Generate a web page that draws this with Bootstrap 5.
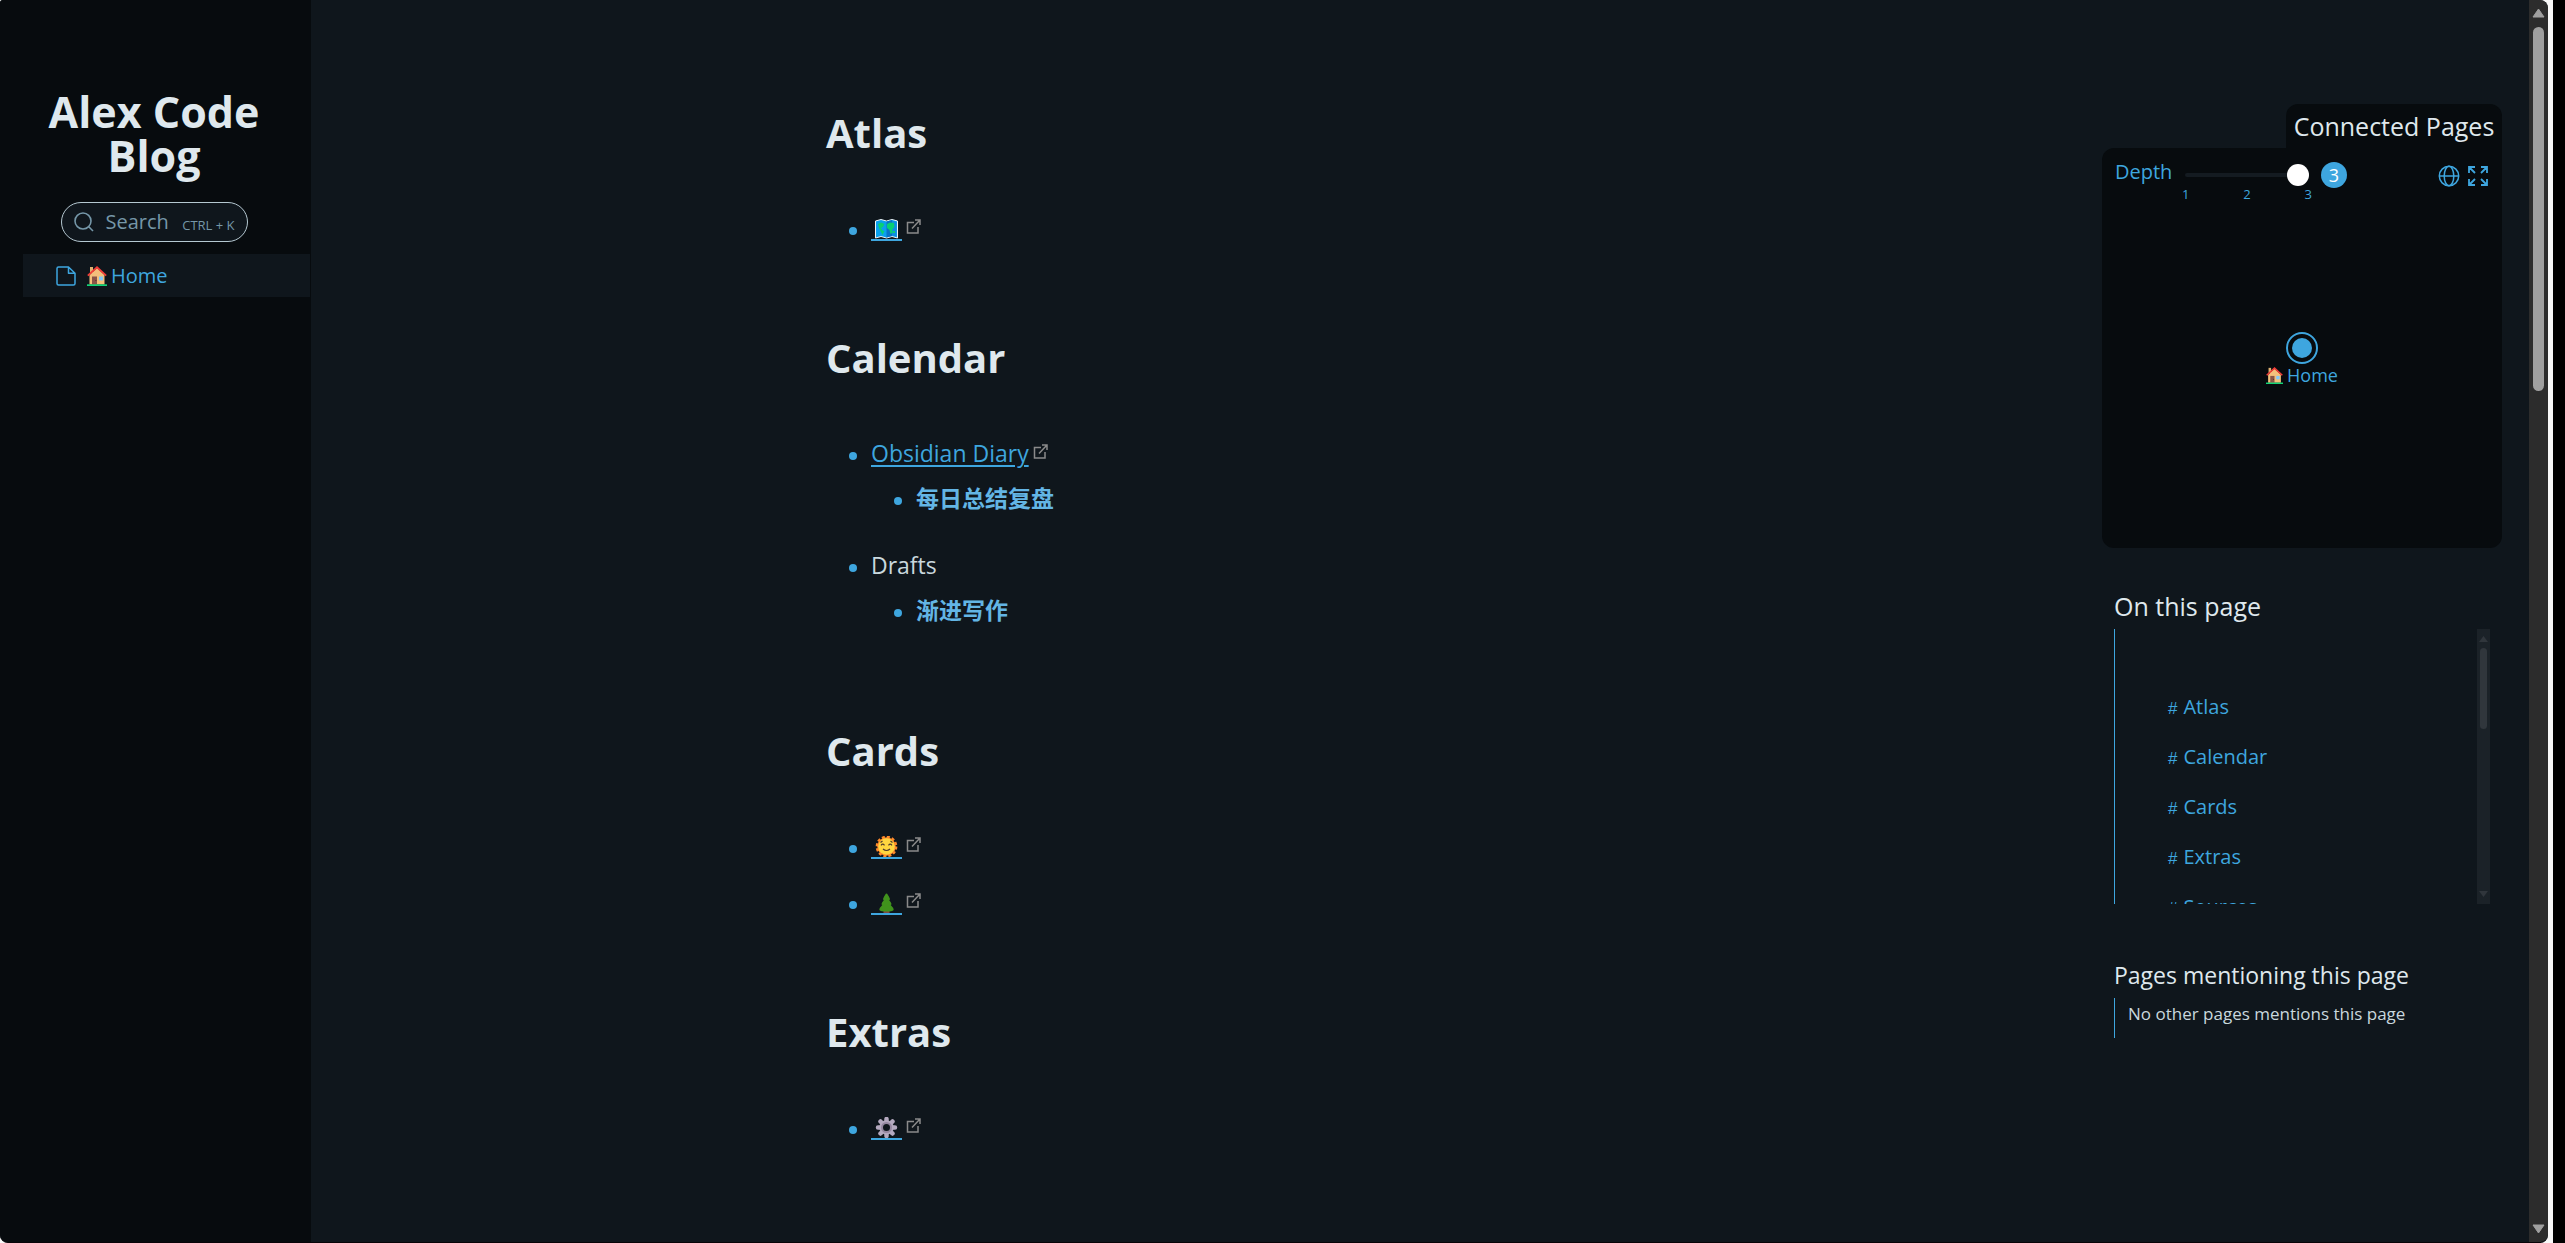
<!DOCTYPE html>
<html lang="en">
<head>
<meta charset="utf-8">
<meta name="viewport" content="width=device-width, initial-scale=1">
<title>Alex Code Blog</title>
<link href="https://cdn.jsdelivr.net/npm/bootstrap@5.3.0/dist/css/bootstrap.min.css" rel="stylesheet">
<style>
  :root { --ink: #070b0e; --deep: #0f161c; --accent: #3ea6df; --bright: #dfe8ed; --soft: #b5c8d1; }
  html, body { height: 100%; }
  body { background: #000; color: #c9d8de; font-family: "Open Sans", "Noto Sans", "Noto Sans CJK SC", sans-serif; font-size: 23px; line-height: 45px; overflow: hidden; }
  a { color: var(--accent); text-decoration: none; }
  svg { display: block; flex: none; }
  .frame { background: #f8f8f8; padding-right: 5px; margin-right: 12px; }
  .window { background: var(--deep); border-radius: 8px; border-top-left-radius: 3px; border-bottom: 1px solid #080408; }
  .side { width: 311px; flex: none; background: var(--ink); padding-top: 90px; }
  .side-head { padding: 0 26px 0 23px; }
  .site-title { font-size: 43px; line-height: 44px; font-weight: 700; color: var(--bright); margin: 0 0 24px; }
  .search-pill { width: 187px; height: 40px; border: 1px solid var(--soft); border-radius: 20px; background: var(--deep); color: #7597a8; font-size: 20px; line-height: 38px; padding: 0 12px; }
  .search-pill kbd { font: 13px "Open Sans", sans-serif; background: none; color: inherit; padding: 6px 0 0; }
  .side-link { background: var(--deep); height: 43px; margin: 12px 1px 0 23px; padding-left: 33px; font-size: 20px; }
  .article { max-width: 761px; padding-top: 111px; }
  .article h2 { font-size: 40px; line-height: 44px; font-weight: 700; color: var(--bright); margin: 0 0 51px; }
  .article ul { list-style: none; padding-left: 45px; margin: 0; }
  .article section > ul { padding-bottom: 74px; }
  .article li { padding-bottom: 11px; }
  .article li::before { content: ""; display: inline-block; width: 8px; height: 8px; border-radius: 50%; background: var(--accent); margin: 0 14px 0 -22px; vertical-align: middle; }
  .article strong { color: #63b5e5; }
  .text-link { text-decoration: underline; text-decoration-thickness: 2px; text-underline-offset: 3px; }
  .emoji-link { display: inline-block; border-bottom: 2px solid var(--accent); padding: 0 4px; line-height: 20px; vertical-align: -4px; }
  .outlink { display: inline-block; margin-left: 4px; vertical-align: 3px; color: #8a8a8a; }
  .rail { width: 400px; flex: none; margin: 104px 27px 0 0; }
  .graph-tab { background: var(--ink); border-radius: 12px 12px 0 0; font-size: 25px; line-height: 44px; color: var(--bright); width: 216px; text-align: center; margin: 0; font-weight: 400; white-space: nowrap; }
  .graph-box { background: var(--ink); border-radius: 12px 0 12px 12px; height: 400px; color: var(--accent); }
  .graph-tools { padding: 14px 14px 0 13px; font-size: 20px; line-height: 26px; height: 56px; }
  .depth-name { width: 70px; line-height: 20px; }
  .depth-range { appearance: none; -webkit-appearance: none; display: block; width: 124px; height: 26px; margin: 0; background: none; }
  .depth-range::-webkit-slider-runnable-track { height: 4px; border-radius: 2px; background: #141b21; }
  .depth-range::-webkit-slider-thumb { -webkit-appearance: none; width: 22px; height: 22px; margin-top: -9px; border-radius: 50%; background: #fff; }
  .ticks { width: 130px; margin-left: -3px; font-size: 13px; line-height: 12px; }
  .depth-badge { width: 26px; height: 26px; border-radius: 50%; background: var(--accent); color: #fff; font-size: 18px; text-align: center; margin-left: 9px; }
  .tool { border: 0; padding: 0; background: none; color: var(--accent); }
  .tools { margin-top: 3px; }
  .node { padding-top: 128px; font-size: 18px; line-height: 22px; }
  .rail-title { font-size: 25px; line-height: 46px; font-weight: 400; color: var(--bright); margin: 35px 0 0; }
  .rail-title.compact { font-size: 23px; margin-top: 48px; }
  .toc { height: 275px; border-left: 1px solid var(--accent); overflow: hidden; }
  .toc-links { padding: 53px 0 0 53px; }
  .toc-links a { height: 50px; font-size: 20px; line-height: 50px; }
  .toc-links small { font-family: "Liberation Sans", sans-serif; font-size: 17px; margin-right: 6px; }
  .toc-scroll { width: 13px; background: #1b2228; padding: 7px 0 6px; }
  .toc-thumb { width: 7px; height: 81px; border-radius: 4px; background: #30363c; margin-top: 5px; }
  .mentions { border-left: 1px solid var(--accent); height: 40px; padding-left: 13px; font-size: 17px; line-height: 32px; }
  .page-scroll { width: 19px; flex: none; background: #2c2c2c; padding: 8px 0; border-radius: 0 8px 8px 0; }
  .page-thumb { width: 11px; height: 364px; border-radius: 6px; background: #9f9f9f; margin-top: 9px; }
</style>
<script src="https://cdn.jsdelivr.net/npm/bootstrap@5.3.0/dist/js/bootstrap.bundle.min.js"></script>
</head>
<body>
<svg width="0" height="0" class="position-absolute" aria-hidden="true">
  <symbol id="house" viewBox="0 0 20 20">
    <path d="M3 1h3v6H3z" fill="#dfb171"/><path d="M2.500 9 10 2l7.500 7v9.500h-15z" fill="#f4c07c"/>
    <path d="M.8 9.700 10 1.300l9.200 8.400" fill="none" stroke="#f23d38" stroke-width="1.800"/>
    <path d="M5 10.500h5v8H5z" fill="#8b5547"/><path d="M12 10.500h4v4h-4z" fill="#83c8f8"/><path d="M0 18.300h20V20H0z" fill="#12d577"/>
    <circle cx="8.900" cy="14.500" r=".6" fill="#4d2b24"/>
  </symbol>
  <symbol id="out" viewBox="0 0 15 15"><path d="M8 3.500H1.500V14H12V8M6 9.500 14 1M9 1h5v5" fill="none" stroke="currentColor" stroke-width="1.500"/></symbol>
</svg>

<div class="frame h-100">
<div class="window d-flex h-100 overflow-hidden">
  <aside class="side">
    <div class="side-head">
      <h1 class="site-title text-center">Alex Code Blog</h1>
      <button type="button" class="search-pill d-flex align-items-center mx-auto">
        <svg width="20" height="20" viewBox="0 0 20 20" fill="none" stroke="currentColor" stroke-width="1.600"><circle cx="9" cy="9" r="8"/><path d="m14.800 14.800 4.200 4.200"/></svg>
        <span class="ms-2 ps-1 me-auto">Search</span><kbd>CTRL + K</kbd>
      </button>
    </div>
    <nav>
      <a href="#" class="side-link d-flex align-items-center">
        <svg width="20" height="20" viewBox="0 0 20 20" fill="none" stroke="currentColor" stroke-width="1.500" stroke-linejoin="round"><path d="M2.500 1h10L19 7.300v10.200q0 1.500-1.500 1.500h-15Q1 19 1 17.500v-15Q1 1 2.500 1zM12.500 1v6.300H19"/></svg>
        <svg class="ms-2 me-1" width="23" height="20"><use href="#house" x="3" width="20" height="20"/></svg>
        <span>Home</span>
      </a>
    </nav>
  </aside>

  <main class="flex-grow-1">
    <div class="article mx-auto">
      <section id="atlas">
        <h2>Atlas</h2>
        <ul>
          <li><a href="#" class="emoji-link" aria-label="Atlas map"><svg width="23" height="20" viewBox="0 0 23 20"><path d="M.5 2 6 .5 11.500 2 17 .5 22.500 2v17L17 17.500 11.500 19 6 17.500.5 19z" fill="#0aa0ee" stroke="#eef4f6"/><path d="M11.500 2.500 17 1v16l-5.500 1.500z" fill="#0872c6"/><path d="M17 1.500 21.500 3v14.500L17 16.500z" fill="#0d8de0"/><path d="m3 5 3-1.500L9.500 5 8 8 6 9l1.500 2.500 2 .5-2 4-1.500-3L4 9zM12 5l3-1.500 4 .5.500 4-2 2v4l-2 1-1-4-2.500-2zM18 12h2v2h-2z" fill="#08cf75"/></svg></a><a href="#" class="outlink" aria-label="Open"><svg width="15" height="15"><use href="#out"/></svg></a></li>
        </ul>
      </section>
      <section id="calendar">
        <h2>Calendar</h2>
        <ul>
          <li><a href="#" class="text-link">Obsidian Diary</a><a href="#" class="outlink" aria-label="Open"><svg width="15" height="15"><use href="#out"/></svg></a>
            <ul><li><strong>每日总结复盘</strong></li></ul>
          </li>
          <li>Drafts
            <ul><li><strong>渐进写作</strong></li></ul>
          </li>
        </ul>
      </section>
      <section id="cards">
        <h2>Cards</h2>
        <ul>
          <li><a href="#" class="emoji-link" aria-label="Sun"><svg width="23" height="21" viewBox="0 0 23 21"><circle cx="11.500" cy="10.500" r="9.300" fill="#ff8a2b"/><circle cx="11.500" cy="10.500" r="9.600" fill="none" stroke="#ff8a2b" stroke-width="2.500" stroke-dasharray="3 2.030"/><circle cx="11.500" cy="10.500" r="8.300" fill="#ffd640"/><path d="M6 9.300q1.700-2.300 3.500 0M13.500 9.300q1.700-2.300 3.500 0M8 13q3.500 3 7 0M5.500 6.500l2-1.500M17.500 6.500l-2-1.500" fill="none" stroke="#513a2c" stroke-width="1.200"/></svg></a><a href="#" class="outlink" aria-label="Open"><svg width="15" height="15"><use href="#out"/></svg></a></li>
          <li><a href="#" class="emoji-link" aria-label="Evergreen"><svg width="23" height="20" viewBox="0 0 23 20"><path d="M8.500 17h6v3h-6z" fill="#7f4a3c"/><path d="M11.500.5q1.200 0 3.500 5.500-.2 1-.8 1.200 2 2 2.300 3.800-.2.800-.8 1 3 2.800 3 5-1.500 1.500-7.200 1.500T4.300 17q0-2.200 3-5-.6-.2-.8-1 .3-1.800 2.300-3.800Q8.200 7 8 6 10.300.5 11.500.5z" fill="#40931c"/></svg></a><a href="#" class="outlink" aria-label="Open"><svg width="15" height="15"><use href="#out"/></svg></a></li>
        </ul>
      </section>
      <section id="extras">
        <h2>Extras</h2>
        <ul>
          <li><a href="#" class="emoji-link" aria-label="Gear"><svg width="23" height="21" viewBox="0 0 23 21"><g stroke="#b4a9bf" stroke-width="4.500" stroke-linecap="round"><path d="M11.500 2v17M3 10.500h17M5.500 4.500l12 12M17.500 4.500l-12 12"/></g><circle cx="11.500" cy="10.500" r="7.200" fill="#b4a9bf"/><circle cx="11.500" cy="10.500" r="4.500" fill="#0f161c" stroke="#94869f" stroke-width="2"/></svg></a><a href="#" class="outlink" aria-label="Open"><svg width="15" height="15"><use href="#out"/></svg></a></li>
        </ul>
      </section>
    </div>
  </main>

  <aside class="rail">
    <h2 class="graph-tab ms-auto">Connected Pages</h2>
    <div class="graph-box">
      <div class="graph-tools d-flex align-items-start">
        <label for="depth" class="depth-name">Depth</label>
        <div>
          <input id="depth" class="depth-range" type="range" min="1" max="3" value="3">
          <div class="ticks d-flex justify-content-between"><span>1</span><span>2</span><span>3</span></div>
        </div>
        <output class="depth-badge p-0" for="depth">3</output>
        <div class="tools d-flex gap-2 ms-auto">
          <button type="button" class="tool" aria-label="Whole graph"><svg width="22" height="22" viewBox="0 0 22 22" fill="none" stroke="currentColor" stroke-width="1.500"><circle cx="11" cy="11" r="9.700"/><ellipse cx="11" cy="11" rx="4.800" ry="9.700"/><path d="M1 11h20"/></svg></button>
          <button type="button" class="tool" aria-label="Full screen"><svg width="20" height="20" viewBox="0 0 20 20" fill="none" stroke="currentColor" stroke-width="1.800"><path d="M1 7V1h6M1 1l6 6M13 1h6v6M19 1l-6 6M1 13v6h6M1 19l6-6M19 13v6h-6M19 19l-6-6"/></svg></button>
        </div>
      </div>
      <div class="node d-flex flex-column align-items-center">
        <svg width="34" height="32" viewBox="0 0 34 32"><circle cx="17" cy="16" r="15" fill="none" stroke="#3ea6df" stroke-width="2"/><circle cx="17" cy="16" r="10" fill="#3ea6df"/></svg>
        <a href="#" class="d-flex align-items-center gap-1"><svg width="17" height="17"><use href="#house"/></svg>Home</a>
      </div>
    </div>

    <div class="px-2">
      <div class="ps-1 pe-1">
        <h2 class="rail-title">On this page</h2>
        <div class="toc d-flex">
          <nav class="toc-links d-flex flex-column flex-grow-1">
            <a href="#atlas"><small>#</small>Atlas</a>
            <a href="#calendar"><small>#</small>Calendar</a>
            <a href="#cards"><small>#</small>Cards</a>
            <a href="#extras"><small>#</small>Extras</a>
            <a href="#sources"><small>#</small>Sources</a>
          </nav>
          <div class="toc-scroll d-flex flex-column align-items-center" aria-hidden="true">
            <svg width="9" height="7"><path d="m4.500 0 4.500 6H0z" fill="#30363c"/></svg>
            <div class="toc-thumb"></div>
            <svg class="mt-auto" width="9" height="7"><path d="M0 0h9L4.500 6z" fill="#30363c"/></svg>
          </div>
        </div>
        <h2 class="rail-title compact">Pages mentioning this page</h2>
        <div class="mentions">No other pages mentions this page</div>
      </div>
    </div>
  </aside>

  <div class="page-scroll d-flex flex-column align-items-center" aria-hidden="true">
    <svg width="13" height="10"><path d="M6.500 1 12 9H1z" fill="#9f9f9f" stroke="#9f9f9f" stroke-linejoin="round"/></svg>
    <div class="page-thumb"></div>
    <svg class="mt-auto" width="13" height="10"><path d="M1 1h11L6.500 9z" fill="#9f9f9f" stroke="#9f9f9f" stroke-linejoin="round"/></svg>
  </div>
</div>
</div>
</body>
</html>
